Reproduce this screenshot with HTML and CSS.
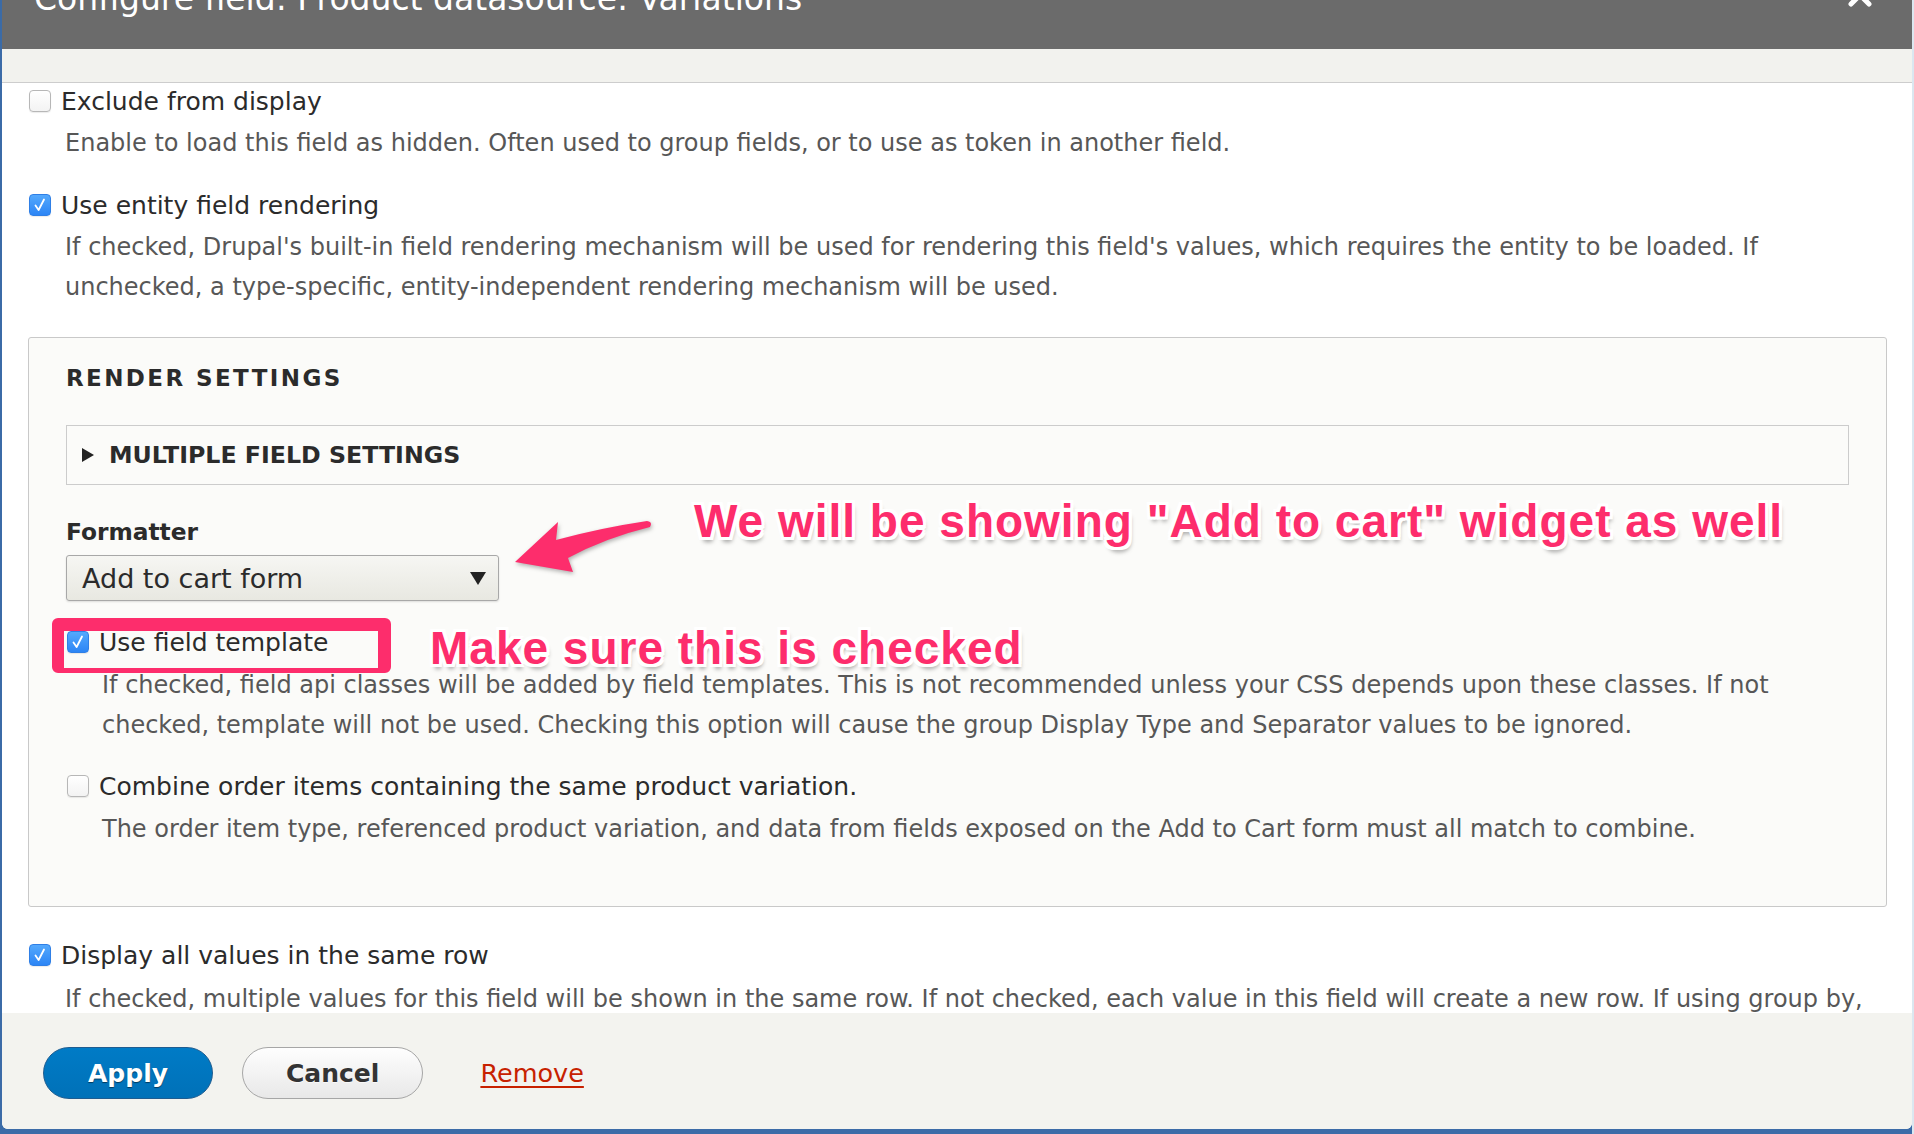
FILE: index.html
```html
<!DOCTYPE html>
<html lang="en">
<head>
<meta charset="utf-8">
<title>Configure field</title>
<link rel="stylesheet" href="styles.css">
</head>
<body>
<div class="dialog">
  <div class="titlebar">
    <h1 class="title">Configure field: Product datasource: Variations</h1>
    <span class="close"><svg width="24" height="24" viewBox="0 0 24 24"><path d="M3 3 L21 21 M21 3 L3 21" stroke="#fff" stroke-width="5" stroke-linecap="round"/></svg></span>
  </div>
  <div class="topband"></div>
  <div class="content">
    <div class="item">
      <div class="opt"><span class="cb"></span><span>Exclude from display</span></div>
      <div class="desc">Enable to load this field as hidden. Often used to group fields, or to use as token in another field.</div>
    </div>
    <div class="item">
      <div class="opt"><span class="cb on"><svg width="20" height="20" viewBox="0 0 20 20"><path d="M5.5 10.5 L8.6 15 L14 4.5" stroke="#fff" stroke-width="1.8" fill="none" stroke-linecap="round" stroke-linejoin="round"/></svg></span><span>Use entity field rendering</span></div>
      <div class="desc">If checked, Drupal's built-in field rendering mechanism will be used for rendering this field's values, which requires the entity to be loaded. If unchecked, a type-specific, entity-independent rendering mechanism will be used.</div>
    </div>
    <div class="fieldset">
      <div class="legend">Render settings</div>
      <div class="details"><span class="tri"></span><span>Multiple field settings</span></div>
      <div class="field">
        <div class="flabel">Formatter</div>
        <div class="select"><span>Add to cart form</span><span class="arrow"></span></div>
      </div>
      <div class="item in">
        <div class="opt"><span class="cb on"><svg width="20" height="20" viewBox="0 0 20 20"><path d="M5.5 10.5 L8.6 15 L14 4.5" stroke="#fff" stroke-width="1.8" fill="none" stroke-linecap="round" stroke-linejoin="round"/></svg></span><span>Use field template</span></div>
        <div class="desc">If checked, field api classes will be added by field templates. This is not recommended unless your CSS depends upon these classes. If not checked, template will not be used. Checking this option will cause the group Display Type and Separator values to be ignored.</div>
      </div>
      <div class="item in">
        <div class="opt"><span class="cb"></span><span>Combine order items containing the same product variation.</span></div>
        <div class="desc">The order item type, referenced product variation, and data from fields exposed on the Add to Cart form must all match to combine.</div>
      </div>
    </div>
    <div class="item after">
      <div class="opt"><span class="cb on"><svg width="20" height="20" viewBox="0 0 20 20"><path d="M5.5 10.5 L8.6 15 L14 4.5" stroke="#fff" stroke-width="1.8" fill="none" stroke-linecap="round" stroke-linejoin="round"/></svg></span><span>Display all values in the same row</span></div>
      <div class="desc">If checked, multiple values for this field will be shown in the same row. If not checked, each value in this field will create a new row. If using group by, please make sure to group by "Entity ID" for this setting to have any effect.</div>
    </div>
  </div>
  <div class="footer">
    <button class="btn primary">Apply</button>
    <button class="btn">Cancel</button>
    <a class="remove" href="#">Remove</a>
  </div>
</div>

<div class="hl"></div>
<svg class="ann-arrow" width="160" height="75" viewBox="0 0 160 75"><path d="M10 52 L53 12 L51 30 Q95 18 142 11 Q148 12 145 17 Q100 28 63 48 L68 62 Z" fill="#fd2d6c"/></svg>
<div class="ann ann1">We will be showing "Add to cart" widget as well</div>
<div class="ann ann2">Make sure this is checked</div>
</body>
</html>
```

FILE: styles.css
```css
html, body {
  margin: 0;
  padding: 0;
}
body {
  width: 1914px;
  height: 1134px;
  overflow: hidden;
  position: relative;
  background: linear-gradient(to left, #dbe7f0 2px, #3b6ba7 2px);
  font-family: "DejaVu Sans", "Lucida Grande", sans-serif;
  color: #2b2b2b;
}
.dialog {
  margin: 0 2px 0 2px;
  height: 1129px;
  background: #fff;
  border-radius: 0 0 6px 6px;
  overflow: hidden;
  display: flex;
  flex-direction: column;
}
.titlebar {
  flex: none;
  height: 49px;
  background: #6b6b6b;
  position: relative;
  overflow: hidden;
  padding-left: 32px;
}
.title {
  margin: -20px 0 0 0;
  font-size: 33px;
  line-height: 38px;
  font-weight: normal;
  color: #fff;
  white-space: nowrap;
}
.close {
  position: absolute;
  right: 40px;
  top: -17px;
  width: 24px;
  height: 24px;
}
.topband {
  flex: none;
  height: 33px;
  background: #f2f2ee;
  border-bottom: 1px solid #cdcdcd;
}
.content {
  flex: none;
  height: 930px;
  box-sizing: border-box;
  overflow: hidden;
  padding: 3px 25px 0 27px;
}
.opt {
  display: flex;
  align-items: center;
  gap: 10px;
  height: 30px;
  font-size: 25px;
  color: #2b2b2b;
  white-space: nowrap;
}
.cb {
  flex: none;
  width: 22px;
  height: 22px;
  box-sizing: border-box;
  border: 1px solid #b7b7b7;
  border-radius: 4px;
  background: linear-gradient(#ffffff, #f3f3f3);
  box-shadow: 0 1px 1px rgba(0, 0, 0, 0.08);
  display: flex;
  align-items: center;
  justify-content: center;
}
.cb.on {
  background: linear-gradient(#54a9fd, #2c85f5);
  border-color: #2f7fe6;
}
.desc {
  margin-top: 7px;
  padding-left: 36px;
  font-size: 24px;
  line-height: 40px;
  color: #575757;
}
.item + .item {
  margin-top: 27px;
}
.fieldset {
  margin: 30px 0 0 -1px;
  border: 1px solid #c9c9c9;
  border-radius: 3px;
  background: #fbfbf9;
  padding: 25px 37px 57px 37px;
}
.legend {
  line-height: 30px;
  font-size: 23px;
  font-weight: bold;
  text-transform: uppercase;
  letter-spacing: 2.4px;
  color: #2b2b2b;
}
.details {
  margin-top: 32px;
  height: 60px;
  box-sizing: border-box;
  border: 1px solid #cccccc;
  background: #fbfbf9;
  display: flex;
  align-items: center;
  gap: 15px;
  padding-left: 15px;
  font-size: 23.7px;
  font-weight: bold;
  text-transform: uppercase;
  color: #2b2b2b;
}
.tri {
  width: 0;
  height: 0;
  border-top: 7px solid transparent;
  border-bottom: 7px solid transparent;
  border-left: 12px solid #222;
}
.field {
  margin-top: 32px;
}
.flabel {
  line-height: 30px;
  font-size: 23.3px;
  font-weight: bold;
  color: #2b2b2b;
}
.select {
  margin-top: 8px;
  width: 433px;
  height: 46px;
  box-sizing: border-box;
  border: 1px solid #a8a8a8;
  border-radius: 3px;
  background: linear-gradient(#f6f6f3, #e8e8e1);
  box-shadow: 0 1px 2px rgba(0, 0, 0, 0.12);
  display: flex;
  align-items: center;
  justify-content: space-between;
  padding: 0 12px 0 15px;
  font-size: 27px;
  color: #2b2b2b;
}
.arrow {
  width: 0;
  height: 0;
  border-left: 8px solid transparent;
  border-right: 8px solid transparent;
  border-top: 13px solid #222;
}
.item.in {
  margin-top: 26px;
}
.item.in .opt {
  padding-left: 1px;
}
.item.in .desc {
  margin-top: 8px;
}
.item.after {
  margin-top: 33px;
}
.item.after .desc {
  margin-top: 9px;
}
.footer {
  flex: none;
  height: 116px;
  box-sizing: border-box;
  background: #f3f3ef;
  padding: 34px 0 0 41px;
  display: flex;
  align-items: flex-start;
}
.btn {
  height: 52px;
  box-sizing: border-box;
  border-radius: 26px;
  border: 1px solid #a6a6a6;
  background: linear-gradient(#fefefe, #e8e8e8);
  color: #333;
  font-family: "DejaVu Sans", sans-serif;
  font-size: 25px;
  font-weight: bold;
  padding: 0 43px;
  margin: 0 29px 0 0;
  text-shadow: 0 1px rgba(255, 255, 255, 0.6);
}
.btn.primary {
  background: linear-gradient(#007bc6, #0071b8);
  border-color: #1e5c90;
  color: #fff;
  padding: 0 44px;
  text-shadow: 0 1px 1px rgba(0, 0, 0, 0.5);
}
.remove {
  margin: 0 0 0 28px;
  line-height: 52px;
  font-size: 25.5px;
  color: #c72100;
  text-decoration: underline;
  text-underline-offset: 4px;
}
.hl {
  position: absolute;
  left: 52px;
  top: 618px;
  width: 339px;
  height: 55px;
  box-sizing: border-box;
  border-style: solid;
  border-color: #fd2d6c;
  border-width: 13px 13px 5px 12px;
  border-radius: 6px;
}
.ann-arrow {
  position: absolute;
  left: 505px;
  top: 510px;
  filter: drop-shadow(1px 2px 2px rgba(0, 0, 0, 0.3));
}
.ann {
  position: absolute;
  font-family: "Liberation Sans", Arial, sans-serif;
  font-weight: bold;
  font-size: 46px;
  line-height: 46px;
  letter-spacing: 1px;
  color: #fd2d6c;
  white-space: nowrap;
  text-shadow:
    -3px -3px 0 #fff, 3px -3px 0 #fff, -3px 3px 0 #fff, 3px 3px 0 #fff,
    0 -3px 0 #fff, 0 3px 0 #fff, -3px 0 0 #fff, 3px 0 0 #fff,
    2px 5px 4px rgba(0, 0, 0, 0.35);
}
.ann1 {
  left: 694px;
  top: 498px;
}
.ann2 {
  left: 430px;
  top: 625px;
}
```
